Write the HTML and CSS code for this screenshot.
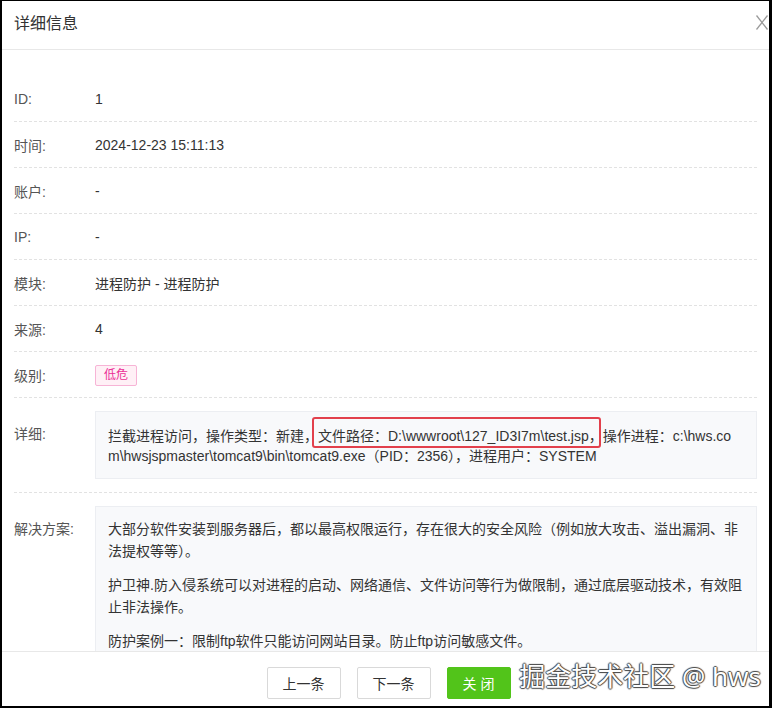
FILE: index.html
```html
<!DOCTYPE html>
<html lang="zh-CN">
<head>
    <meta charset="UTF-8">
    <title>详细信息</title>
    <link rel="stylesheet" href="styles.css">
</head>
<body>
    <div class="dialog">
        <div class="dialog-head">
            <span class="dialog-title">详细信息</span>
            <span class="dialog-close">
                <svg width="12" height="15" viewBox="0 0 12 15">
                    <line x1="0.5" y1="0.5" x2="11.5" y2="14.5" stroke="#9a9a9a" stroke-width="1.3"/>
                    <line x1="11.5" y1="0.5" x2="0.5" y2="14.5" stroke="#9a9a9a" stroke-width="1.3"/>
                </svg>
            </span>
        </div>

        <div class="dialog-body">
            <div class="row">
                <div class="row-label">ID:</div>
                <div class="row-value">1</div>
            </div>
            <div class="row">
                <div class="row-label">时间:</div>
                <div class="row-value">2024-12-23 15:11:13</div>
            </div>
            <div class="row">
                <div class="row-label">账户:</div>
                <div class="row-value">-</div>
            </div>
            <div class="row">
                <div class="row-label">IP:</div>
                <div class="row-value">-</div>
            </div>
            <div class="row">
                <div class="row-label">模块:</div>
                <div class="row-value">进程防护 - 进程防护</div>
            </div>
            <div class="row">
                <div class="row-label">来源:</div>
                <div class="row-value">4</div>
            </div>
            <div class="row">
                <div class="row-label">级别:</div>
                <div class="row-value"><span class="tag-low">低危</span></div>
            </div>
            <div class="row row-box">
                <div class="row-label">详细:</div>
                <div class="info-box detail-box">拦截进程访问，操作类型：新建，<span class="mark">文件路径：D:\wwwroot\127_ID3I7m\test.jsp</span>，操作进程：c:\hws.com\hwsjspmaster\tomcat9\bin\tomcat9.exe（PID：2356），进程用户：SYSTEM</div>
            </div>
            <div class="row row-box">
                <div class="row-label">解决方案:</div>
                <div class="info-box solution-box">
                    <p>大部分软件安装到服务器后，都以最高权限运行，存在很大的安全风险（例如放大攻击、溢出漏洞、非法提权等等）。</p>
                    <p>护卫神.防入侵系统可以对进程的启动、网络通信、文件访问等行为做限制，通过底层驱动技术，有效阻止非法操作。</p>
                    <p>防护案例一：限制ftp软件只能访问网站目录。防止ftp访问敏感文件。</p>
                    <p>防护案例二：限制web服务只能访问网站目录，防止木马跨站读取其他网站文件。</p>
                </div>
            </div>
        </div>

        <div class="dialog-foot">
            <button class="btn">上一条</button>
            <button class="btn">下一条</button>
            <button class="btn btn-green">关 闭</button>
            <span class="watermark">掘金技术社区 @ hws</span>
        </div>
    </div>
</body>
</html>
```

FILE: styles.css
```css
body {
    margin: 0;
    font-family: "Liberation Sans", "Noto Sans CJK SC", sans-serif;
    font-size: 14px;
    color: #333;
}
.dialog {
    width: 772px;
    height: 708px;
    box-sizing: border-box;
    border-style: solid;
    border-color: #000;
    border-width: 1px 3px 2px 2px;
    background: #fff;
    display: flex;
    flex-direction: column;
    position: relative;
}
.dialog-head {
    height: 48px;
    border-bottom: 1px solid #e8e8e8;
    display: flex;
    align-items: center;
    justify-content: space-between;
    padding: 0 0 0 12px;
    flex-shrink: 0;
}
.dialog-title {
    font-size: 16px;
    color: #333;
    margin-top: -6px;
}
.dialog-close {
    display: flex;
    margin: -5px 1px 0 0;
}
.dialog-body {
    flex: 1;
    overflow: hidden;
    padding: 26px 12px 0 12px;
}
.row {
    display: flex;
    align-items: center;
    height: 45px;
    border-bottom: 1px dashed #e2e2e2;
}
.row-label {
    width: 81px;
    flex-shrink: 0;
    color: #555;
}
.row-value {
    color: #333;
}
.tag-low {
    display: inline-block;
    height: 19px;
    line-height: 19px;
    padding: 0 8px;
    font-size: 12px;
    color: #eb2f96;
    background: #fff0f6;
    border: 1px solid #f7b4d6;
    border-radius: 2px;
    margin-top: 1px;
}
.row-box {
    height: auto;
    align-items: flex-start;
    padding: 13px 0;
}
.row-box .row-label {
    padding-top: 13px;
    line-height: 20px;
}
.info-box {
    flex: 1;
    background: #f8f9fb;
    border: 1px solid #eceef2;
    color: #333;
    word-break: break-all;
}
.detail-box {
    padding: 14px 14px 12px 12px;
    line-height: 20px;
}
.mark {
    position: relative;
}
.mark::after {
    content: "";
    position: absolute;
    left: -6px;
    right: -12px;
    top: -11px;
    bottom: -4px;
    border: 2px solid #e2404c;
    border-radius: 3px;
}
.solution-box {
    padding: 12px 6px 12px 12px;
    line-height: 21.5px;
}
.solution-box p {
    margin: 0 0 13px 0;
}
.dialog-foot {
    height: 55px;
    flex-shrink: 0;
    border-top: 1px solid #e8e8e8;
    display: flex;
    justify-content: center;
    align-items: flex-start;
    gap: 16px;
    padding: 15px 0 0 6px;
    box-sizing: border-box;
}
.btn {
    height: 32px;
    width: 74px;
    font-family: inherit;
    font-size: 14px;
    color: #333;
    background: #fff;
    border: 1px solid #d9d9d9;
    border-radius: 2px;
    padding: 0;
}
.btn-green {
    width: 64px;
    color: #fff;
    background: #52c41a;
    border-color: #52c41a;
}
.watermark {
    position: absolute;
    right: 8px;
    bottom: 12px;
    font-family: "Noto Sans", "Noto Sans CJK SC", sans-serif;
    font-size: 26px;
    color: #fff;
    text-shadow: 1px 0 1px #444, -1px 0 1px #444, 0 1px 1px #444, 0 -1px 1px #444;
}
```
